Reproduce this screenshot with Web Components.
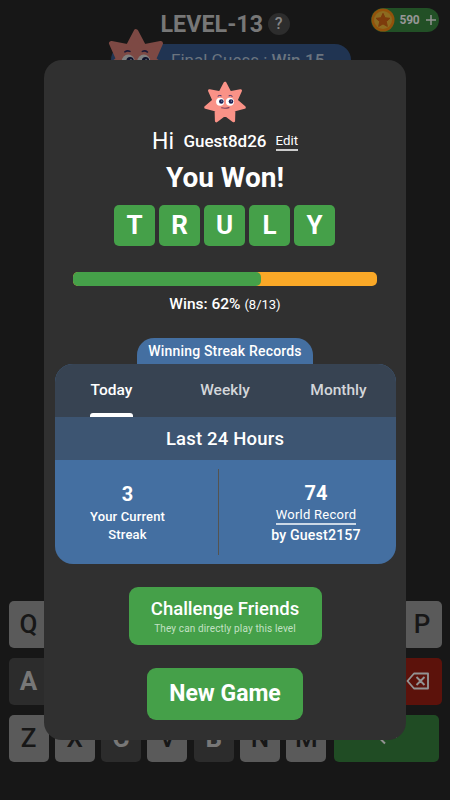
<!DOCTYPE html>
<html lang="en">
<head>
<meta charset="utf-8">
<title>Word game</title>
<style>
html,body{margin:0;height:100%;background:#171717;overflow:hidden}
body{font-family:Roboto,"Liberation Sans",sans-serif}
</style>
</head>
<body>
<game-screen></game-screen>
<script>
const define = (name, html, setup) => {
  const t = document.createElement('template');
  t.innerHTML = html;
  customElements.define(name, class extends HTMLElement {
    connectedCallback() {
      if (this.shadowRoot) return;
      this.attachShadow({ mode: 'open' }).append(t.content.cloneNode(true));
      if (setup) setup(this, this.shadowRoot);
    }
  });
};

define('star-buddy', `<style>:host{display:block;width:44px;height:44px}svg{display:block;width:100%;height:100%}</style>
<svg viewBox="-22 -22 44 44"><polygon fill="#fa9287" stroke="#fa9287" stroke-width="3" stroke-linejoin="round"/>
<circle cx="-4.9" cy="-1.3" r="4" fill="#fff"/><circle cx="4.9" cy="-1.3" r="4" fill="#fff"/>
<circle cx="-3.7" cy="-1.5" r="2.3" fill="#1d2256"/><circle cx="6" cy="-1.5" r="2.3" fill="#1d2256"/>
<circle cx="-3.2" cy="-1.9" r=".7" fill="#9ab"/><circle cx="6.4" cy="-1.9" r=".7" fill="#9ab"/>
<path d="M-7-7Q-5.5-8.1-3.8-7.3M4-7.3Q5.8-8.1 7.2-6.9" fill="none" stroke="#38306a" stroke-width="1" stroke-linecap="round"/>
<path d="M-3.4 4.8Q0 5.8 4 4.6" fill="none" stroke="#7a3f5c" stroke-width="1.1" stroke-linecap="round"/></svg>`,
(el, r) => {
  const p = [];
  for (let i = 0; i < 14; i++) {
    const a = i * Math.PI / 7, d = i % 2 ? 11.4 : 19.8;
    p.push((d * Math.sin(a)).toFixed(2) + ',' + (-d * Math.cos(a)).toFixed(2));
  }
  r.querySelector('polygon').setAttribute('points', p.join(' '));
});

define('coin-balance', `<style>:host{display:flex;align-items:center;width:68px;height:24px;border-radius:12px;background:#225026;color:#969696}
svg{display:block}.n{font-size:12px;font-weight:700;line-height:24px;margin-left:4.5px;width:21.5px;letter-spacing:-.2px}.p{margin-left:5px}</style>
<svg width="24" height="24" viewBox="0 0 24 24"><circle cx="12" cy="12" r="11.5" fill="#93520b"/><circle cx="12" cy="12" r="9" fill="#8c6b20"/><path d="M12 5.3l2 4.5 4.9.5-3.6 3.3 1 4.8-4.3-2.5-4.3 2.5 1-4.8-3.6-3.3 4.9-.5z" fill="#7d3b0c" stroke="#7d3b0c" stroke-linejoin="round"/></svg>
<span class="n"><slot></slot></span><svg class="p" width="10" height="10" viewBox="0 0 10 10"><path d="M5 0V10M0 5H10" stroke="#929292" stroke-width="1.5"/></svg>`);

define('game-key', `<style>:host{display:block;box-sizing:border-box;width:40px;height:47px;border-radius:5px;background:#5a5a5a;color:#171717;font-size:26px;font-weight:500;line-height:46px;text-align:center}
:host([used]){background:#2c2c2c;color:#777;font-weight:700}
:host([erase]){width:51px;background:#5c120b}
:host([enter]){width:105px;background:#204c24}</style><slot></slot>`);
define('erase-icon', `<style>:host{display:block}svg{display:block;margin:14px 0 0 15px}</style>
<svg width="24" height="19" viewBox="0 0 24 19"><path d="M8 1.5H22V16.5H8L1.5 9Z M10.5 5L18.5 13M18.5 5L10.5 13" fill="none" stroke="#929292" stroke-width="1.9" stroke-linejoin="round"/></svg>`);
define('enter-icon', `<style>:host{display:block}svg{display:block;margin:12px 0 0 41px}</style>
<svg width="24" height="22" viewBox="0 0 24 22"><path d="M21 4V10H5M10 3.5L3.5 10L10 16.5" fill="none" stroke="#929292" stroke-width="2"/></svg>`);

define('key-board', `<style>:host{display:grid;row-gap:10px;width:433.5px}
.r{display:flex;justify-content:space-between}.b{justify-content:flex-start;gap:6.3px}.b game-key[enter]{margin-left:1.6px}</style>
<div class="r"><game-key>Q</game-key><game-key>P</game-key></div>
<div class="r"><game-key used>A</game-key><game-key erase><erase-icon></erase-icon></game-key></div>
<div class="r b"><game-key>Z</game-key><game-key>X</game-key><game-key used>C</game-key><game-key>V</game-key><game-key used>B</game-key><game-key>N</game-key><game-key>M</game-key><game-key enter><enter-icon></enter-icon></game-key></div>`);

define('letter-tile', `<style>:host{display:block;width:41px;height:41px;border-radius:5px;background:#45a049;color:#fff;font-size:26px;font-weight:700;line-height:41px;text-align:center}</style><slot></slot>`);

define('win-meter', `<style>:host{display:block;width:304px;height:14px;border-radius:5px;background:#faa827}div{width:62%;height:14px;border-radius:5px;background:#45a049}</style><div></div>`);

define('action-button', `<style>:host{display:flex;flex-direction:column;align-items:center;box-sizing:border-box;border-radius:9px;background:#45a049;color:#fff;white-space:nowrap}</style><slot></slot>`);

define('streak-card', `<style>:host{display:flex;flex-direction:column;align-items:center;color:#fff;white-space:nowrap}
.cap{width:176px;height:26px;border-radius:17px 17px 0 0;background:#446fa1;font-size:14px;font-weight:500;line-height:26px;text-align:center;letter-spacing:.18px}
.card{width:341px;height:200px;border-radius:18px;overflow:hidden;background:#446fa1}
.tabs{height:53px;background:#374352;display:grid;grid-template-columns:114px 113px 114px;justify-items:center;font-size:15.5px;font-weight:500;line-height:52px;color:#d3d6da}
.tabs span{box-sizing:border-box;height:53px}.tabs .on{color:#fff;position:relative}
.on::after{content:"";position:absolute;left:-.5px;right:-.5px;bottom:0;height:4px;border-radius:3px 3px 0 0;background:#fff}
.h{height:43px;background:#3d5572;text-align:center;font-size:18.5px;font-weight:500;line-height:44px;letter-spacing:.18px}
.s{display:grid;grid-template-columns:163px 1px 177px;height:104px}
.d{background:#545350;height:86px;margin-top:9px}
.c{display:flex;flex-direction:column;align-items:center;font-size:13px;letter-spacing:.15px;font-weight:500;line-height:18px}
.l{padding:22px 17px 0 0}.l .n{height:26px;line-height:25px}.r{padding:21px 0 0 18px}.n{font-size:20px;font-weight:700;line-height:24px}
.w{font-weight:400;line-height:17px;letter-spacing:.25px;border-bottom:2px solid #cbd8e6;height:17px;margin-top:1px}.g{font-size:14.2px;line-height:20px}</style>
<div class="cap">Winning Streak Records</div>
<div class="card"><div class="tabs"><span class="on">Today</span><span>Weekly</span><span>Monthly</span></div><div class="h">Last 24 Hours</div>
<div class="s"><div class="c l"><span class="n">3</span><span>Your Current</span><span>Streak</span></div><div class="d"></div><div class="c r"><span class="n">74</span><span class="w">World Record</span><span class="g">by Guest2157</span></div></div></div>`);

define('result-dialog', `<style>:host{display:flex;flex-direction:column;align-items:center;box-sizing:border-box;width:362px;height:680px;padding-top:21px;border-radius:18px;background:#303030;color:#fff;white-space:nowrap}
.hi{display:flex;align-items:flex-start;height:30px;margin-top:2px;line-height:30px}
.hi .a{font-size:23px;font-weight:400;letter-spacing:.2px;line-height:29px}.hi .b{font-size:17px;font-weight:500;margin-left:9px;line-height:29px}.hi .e{font-size:13.3px;line-height:17px;height:17px;border-bottom:2px solid #ccc;margin:5px 0 0 9px}
.won{font-size:28px;font-weight:700;line-height:36px;height:36px;margin-top:3px}
.tiles{display:flex;gap:4px;margin:9px 1px 0 0}
win-meter{margin-top:26px}.w{font-size:15.5px;font-weight:500;line-height:20px;margin-top:8px}.w small{font-size:13px;font-weight:400}
streak-card{margin-top:23px}
.ch{width:193px;height:58px;margin-top:23px;padding-top:10px}.ch b{font-size:18.5px;font-weight:500;line-height:24px}.ch i{font-style:normal;font-size:10px;letter-spacing:.14px;line-height:16px;color:#c3e0c4}
.ng{width:156px;height:52px;margin-top:23px;font-size:23px;font-weight:700;line-height:52px}</style>
<star-buddy></star-buddy>
<div class="hi"><span class="a">Hi</span><span class="b">Guest8d26</span><span class="e">Edit</span></div>
<div class="won">You Won!</div>
<div class="tiles"><letter-tile>T</letter-tile><letter-tile>R</letter-tile><letter-tile>U</letter-tile><letter-tile>L</letter-tile><letter-tile>Y</letter-tile></div>
<win-meter></win-meter><div class="w">Wins: 62% <small>(8/13)</small></div>
<streak-card></streak-card>
<action-button class="ch"><b>Challenge Friends</b><i>They can directly play this level</i></action-button>
<action-button class="ng">New Game</action-button>`);

define('game-screen', `<style>:host{display:flex;flex-direction:column;justify-content:space-between;position:relative;box-sizing:border-box;width:450px;height:800px;padding:8px 0 38px;overflow:hidden;background:#171717;color:#969696;white-space:nowrap}
header{display:grid;grid-template-columns:160.5px auto 1fr;height:32px}
h1{margin:0;grid-column:2;font-size:23.3px;font-weight:700;line-height:32px;color:#777}
.q{width:22px;height:22px;border-radius:50%;background:#2d2d2d;text-align:center;font-size:16px;font-weight:500;line-height:22px;margin:5px 0 0 4.5px;color:#858585}
.right{display:flex;justify-content:space-between;padding-right:11px}
.hint{box-sizing:border-box;width:240px;height:32px;margin:4px 0 0 111px;padding-left:60px;border-radius:16px;background:#203452;font-size:17px;line-height:33px;color:#6b747f}
.hint b{font-weight:500;letter-spacing:.1px}
key-board{margin-left:8.5px}
.big{position:absolute;left:100.5px;top:27.5px;width:70px;height:70px;filter:brightness(.5)}
result-dialog{position:absolute;left:44px;top:60px}</style>
<div><header><h1>LEVEL-13</h1><div class="right"><div class="q">?</div><coin-balance>590</coin-balance></div></header>
<div class="hint">Final Guess : <b>Win 15</b></div></div>
<key-board></key-board>
<star-buddy class="big"></star-buddy>
<result-dialog></result-dialog>`);
</script>
</body>
</html>
